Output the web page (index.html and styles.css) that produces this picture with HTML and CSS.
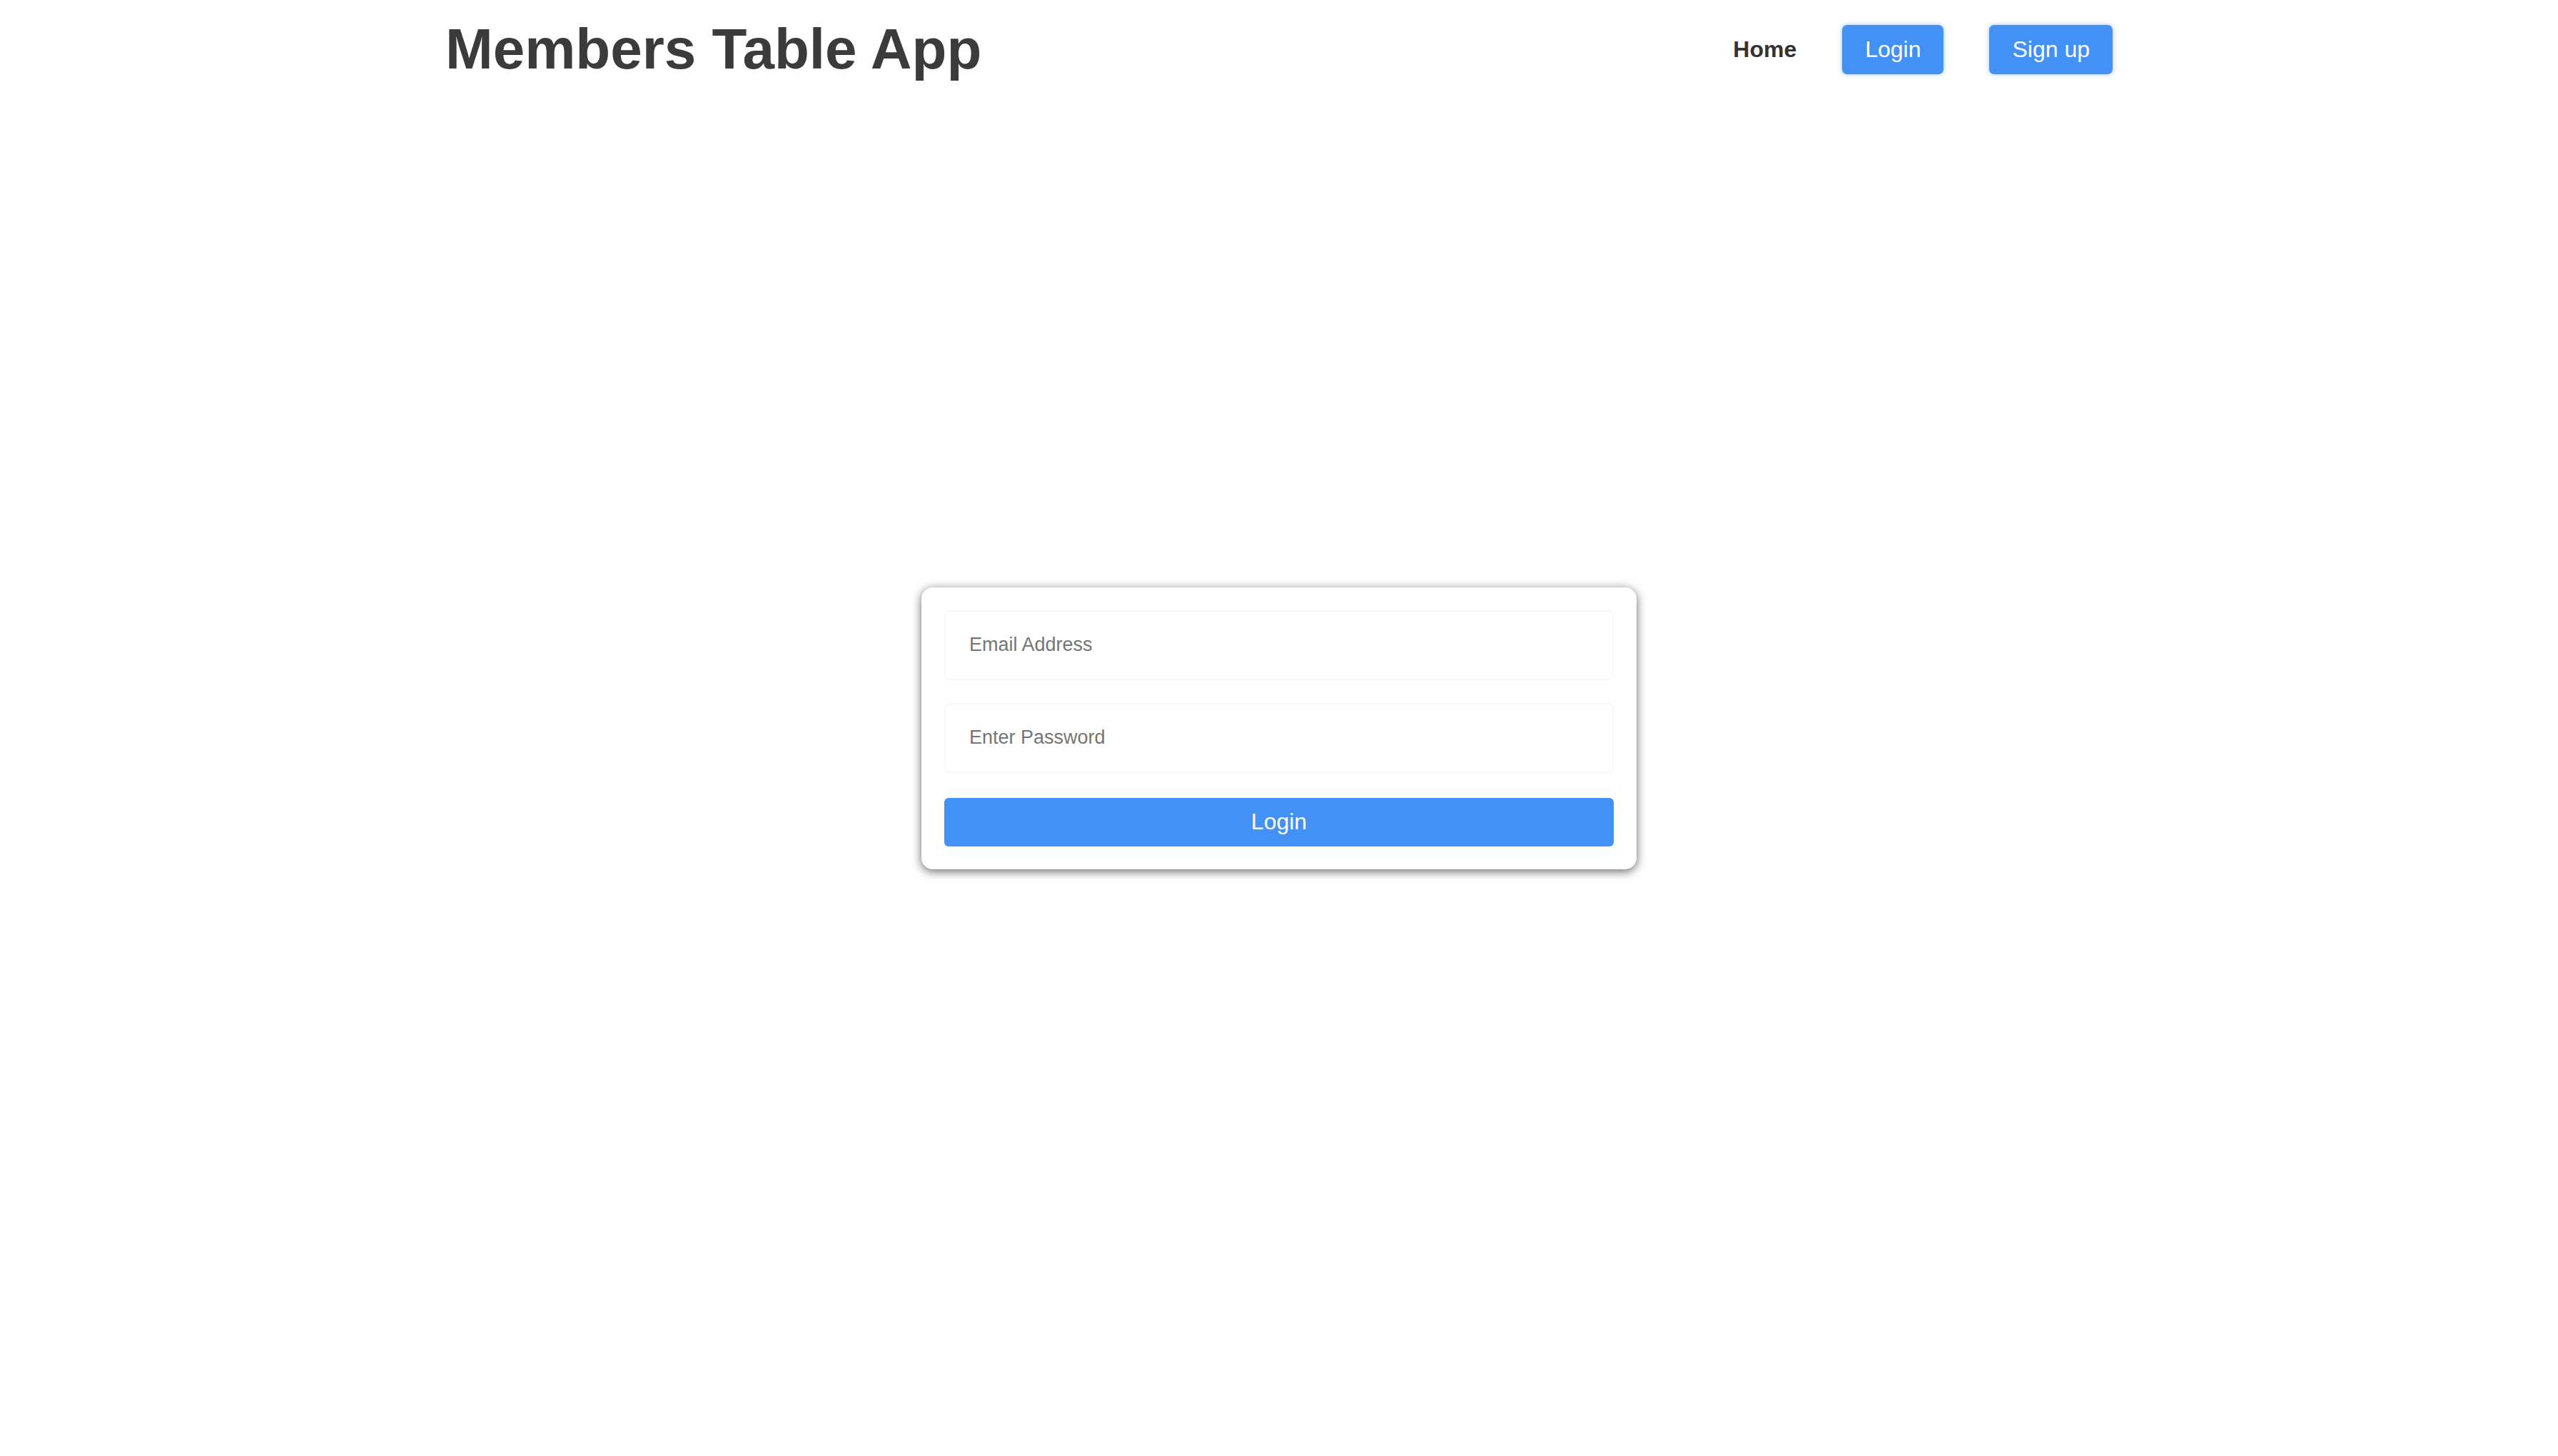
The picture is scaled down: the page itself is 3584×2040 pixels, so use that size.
FILE: index.html
```html
<!DOCTYPE html>
<html lang="en">
<head>
<meta charset="utf-8">
<title>Members Table App</title>
<link rel="stylesheet" href="styles.css">
</head>
<body>
<header class="header">
  <h1 class="brand">Members Table App</h1>
  <nav class="nav">
    <a class="nav-link" href="#">Home</a>
    <a class="nav-btn" href="#">Login</a>
    <a class="nav-btn" href="#">Sign up</a>
  </nav>
</header>
<main class="main">
  <form class="card">
    <input class="field" type="email" placeholder="Email Address">
    <input class="field" type="password" placeholder="Enter Password">
    <button class="submit" type="button">Login</button>
  </form>
</main>
</body>
</html>
```
FILE: styles.css
```css
* { box-sizing: border-box; }
html, body { margin: 0; padding: 0; background: #fff; }
body {
  font-family: "Liberation Sans", Arial, Helvetica, sans-serif;
  color: #3b3b3b;
  min-height: 100vh;
}
.header {
  width: 2336px;
  height: 138px;
  margin: 0 auto;
  display: flex;
  align-items: center;
  justify-content: space-between;
}
.brand {
  margin: 0;
  font-size: 80px;
  font-weight: 700;
  color: #3b3b3b;
  line-height: 1;
}
.nav {
  display: flex;
  align-items: center;
  gap: 64px;
}
.nav-link {
  font-size: 32px;
  font-weight: 700;
  color: #333;
  text-decoration: none;
}
.nav-btn {
  display: block;
  font-size: 32px;
  line-height: 37px;
  padding: 16px 32px;
  color: #fff;
  background: #4391f5;
  border-radius: 7px;
  text-decoration: none;
  box-shadow: 0 0 6px rgba(67, 145, 245, 0.55);
}
.main {
  min-height: calc(100vh - 276px);
  display: flex;
  align-items: center;
  justify-content: center;
}
.card {
  width: 1002px;
  padding: 32px;
  background: #fff;
  border-radius: 16px;
  box-shadow: 0 3px 14px rgba(0, 0, 0, 0.6);
  display: flex;
  flex-direction: column;
}
.field {
  height: 98px;
  border: 2px solid #f7f7f7;
  border-radius: 8px;
  padding: 0 33px;
  font-family: "Liberation Sans", Arial, sans-serif;
  font-size: 27px;
  color: #333;
  background: #fff;
  outline: none;
  margin-bottom: 32px;
}
.field + .field { margin-bottom: 35px; }
.field::placeholder { color: #757575; }
.submit {
  height: 68px;
  border: none;
  border-radius: 6px;
  background: #4391f5;
  color: #fff;
  font-family: "Liberation Sans", Arial, sans-serif;
  font-size: 32px;
  cursor: pointer;
}
```
